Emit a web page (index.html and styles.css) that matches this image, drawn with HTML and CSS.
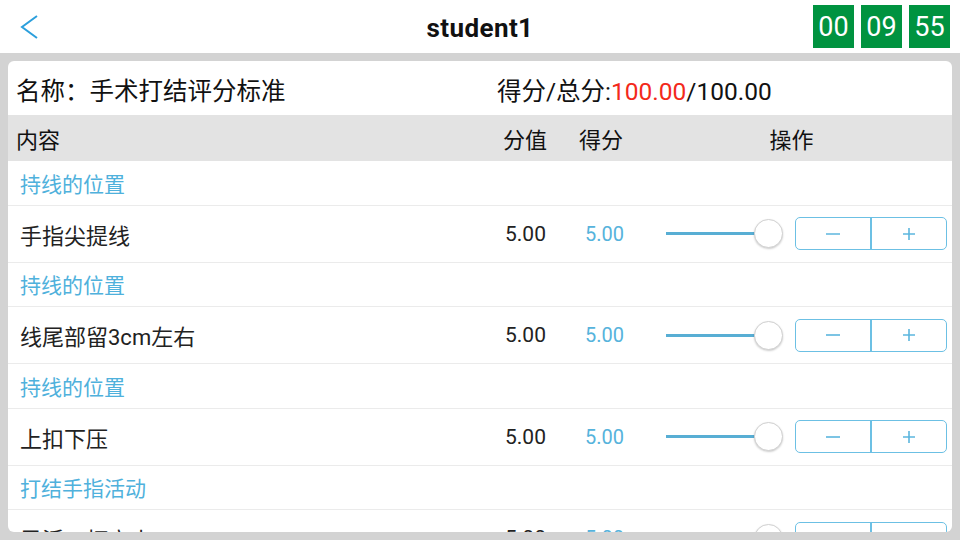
FILE: index.html
```html
<!DOCTYPE html>
<html lang="zh-CN">
<head>
<meta charset="utf-8">
<title>student1</title>
<link rel="stylesheet" href="styles.css">
</head>
<body>
<header class="topbar">
  <div class="back">
    <svg width="20" height="26" viewBox="0 0 20 26"><path d="M18 2 L3 13 L18 24" fill="none" stroke="#2b9fdc" stroke-width="2"/></svg>
  </div>
  <div class="title">student1</div>
  <div class="timer">
    <span class="tbox">00</span><span class="tbox">09</span><span class="tbox">55</span>
  </div>
</header>
<main class="card">
  <div class="name-row">
    <div class="name">名称：手术打结评分标准</div>
    <div class="total">得分/总分:<span class="red">100.00</span>/100.00</div>
  </div>
  <div class="thead">
    <div class="c1">内容</div>
    <div class="c2">分值</div>
    <div class="c3">得分</div>
    <div class="c4">操作</div>
  </div>
  <div class="list">
    <div class="cat">持线的位置</div>
    <div class="item">
      <div class="c1">手指尖提线</div>
      <div class="c2">5.00</div>
      <div class="c3">5.00</div>
      <div class="c4 ops">
        <div class="slider"><span class="track"></span><span class="thumb"></span></div>
        <div class="btns">
          <span class="btn"><svg width="14" height="4" viewBox="0 0 14 4"><path d="M0 2 H14" stroke="#5cb6de" stroke-width="1.6"/></svg></span>
          <span class="btn"><svg width="12" height="12" viewBox="0 0 12 12"><path d="M0 6 H12 M6 0 V12" stroke="#5cb6de" stroke-width="1.6"/></svg></span>
        </div>
      </div>
    </div>
    <div class="cat">持线的位置</div>
    <div class="item">
      <div class="c1">线尾部留3cm左右</div>
      <div class="c2">5.00</div>
      <div class="c3">5.00</div>
      <div class="c4 ops">
        <div class="slider"><span class="track"></span><span class="thumb"></span></div>
        <div class="btns">
          <span class="btn"><svg width="14" height="4" viewBox="0 0 14 4"><path d="M0 2 H14" stroke="#5cb6de" stroke-width="1.6"/></svg></span>
          <span class="btn"><svg width="12" height="12" viewBox="0 0 12 12"><path d="M0 6 H12 M6 0 V12" stroke="#5cb6de" stroke-width="1.6"/></svg></span>
        </div>
      </div>
    </div>
    <div class="cat">持线的位置</div>
    <div class="item">
      <div class="c1">上扣下压</div>
      <div class="c2">5.00</div>
      <div class="c3">5.00</div>
      <div class="c4 ops">
        <div class="slider"><span class="track"></span><span class="thumb"></span></div>
        <div class="btns">
          <span class="btn"><svg width="14" height="4" viewBox="0 0 14 4"><path d="M0 2 H14" stroke="#5cb6de" stroke-width="1.6"/></svg></span>
          <span class="btn"><svg width="12" height="12" viewBox="0 0 12 12"><path d="M0 6 H12 M6 0 V12" stroke="#5cb6de" stroke-width="1.6"/></svg></span>
        </div>
      </div>
    </div>
    <div class="cat">打结手指活动</div>
    <div class="item">
      <div class="c1">灵活、打高小</div>
      <div class="c2">5.00</div>
      <div class="c3">5.00</div>
      <div class="c4 ops">
        <div class="slider"><span class="track"></span><span class="thumb"></span></div>
        <div class="btns">
          <span class="btn"><svg width="14" height="4" viewBox="0 0 14 4"><path d="M0 2 H14" stroke="#5cb6de" stroke-width="1.6"/></svg></span>
          <span class="btn"><svg width="12" height="12" viewBox="0 0 12 12"><path d="M0 6 H12 M6 0 V12" stroke="#5cb6de" stroke-width="1.6"/></svg></span>
        </div>
      </div>
    </div>
  </div>
</main>
</body>
</html>
```

FILE: styles.css
```css
* { box-sizing: border-box; }
html, body { margin: 0; padding: 0; }
body {
  width: 960px;
  height: 540px;
  overflow: hidden;
  background: #d3d3d3;
  display: flex;
  flex-direction: column;
  font-family: Roboto, "Noto Sans CJK SC", sans-serif;
  color: #222;
}
.topbar {
  height: 53px;
  flex: none;
  background: #fff;
  display: grid;
  grid-template-columns: 1fr auto 1fr;
  align-items: center;
}
.back { padding-left: 19px; display: flex; align-items: center; padding-top: 1px; }
.back svg { display: block; }
.title {
  font-family: Roboto, sans-serif;
  font-weight: 700;
  font-size: 26px;
  color: #111;
  letter-spacing: 0.4px;
  padding-top: 2px;
}
.timer {
  justify-self: end;
  align-self: start;
  margin-top: 5px;
  padding-right: 10px;
  display: flex;
  gap: 7px;
}
.tbox {
  width: 41px;
  height: 43px;
  background: #009340;
  color: #fff;
  font-size: 27px;
  display: flex;
  align-items: center;
  justify-content: center;
  font-family: Roboto, sans-serif;
}
.card {
  flex: 1;
  margin: 8px;
  background: #fff;
  border-radius: 6px;
  overflow: hidden;
  display: flex;
  flex-direction: column;
}
.name-row {
  height: 54px;
  flex: none;
  display: flex;
  align-items: center;
  font-size: 24.5px;
  color: #111;
  padding-left: 8px;
  padding-top: 2px;
}
.name { width: 481px; }
.red { color: #f3291b; }
.thead, .item {
  display: grid;
  grid-template-columns: 487px 76px 76px 1fr;
  align-items: center;
}
.thead {
  height: 46px;
  flex: none;
  background: #e3e3e3;
  font-size: 22px;
  color: #111;
}
.thead .c1 { padding-left: 8px; }
.thead .c2, .thead .c3 { padding-left: 8px; }
.thead .c4 { text-align: center; padding-right: 16px; }
.cat {
  height: 44.5px;
  border-bottom: 1px solid #ebebeb;
  display: flex;
  align-items: center;
  padding-left: 12px;
  font-size: 21px;
  color: #4fb1dc;
}
.item {
  height: 57px;
  border-bottom: 1px solid #ebebeb;
}
.item .c1 { padding-left: 12px; font-size: 22px; color: #222; }
.item .c2 { padding-left: 10px; font-size: 21px; color: #222; }
.item .c3 { padding-left: 14px; font-size: 20px; color: #56b3dc; }
.ops {
  display: flex;
  align-items: center;
  padding-left: 19px;
  gap: 12px;
}
.slider { display: flex; align-items: center; width: 117px; }
.track { width: 90px; height: 3px; background: #58aed4; }
.thumb {
  width: 29px;
  height: 29px;
  margin-left: -2px;
  border-radius: 50%;
  background: #fff;
  border: 1px solid #d0d0d0;
  box-shadow: 0 1px 2px rgba(0,0,0,0.2);
}
.btns {
  width: 152px;
  height: 33px;
  border: 1.5px solid #6cc0e4;
  border-radius: 5px;
  display: flex;
}
.btn {
  flex: 1;
  display: flex;
  align-items: center;
  justify-content: center;
}
.btn + .btn { border-left: 2px solid #6cc0e4; }
.btn svg { display: block; }
```
